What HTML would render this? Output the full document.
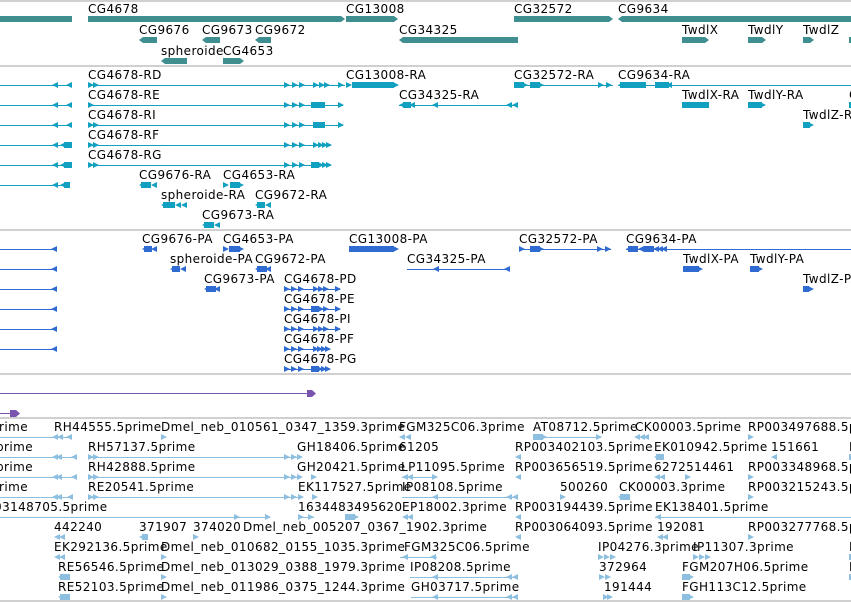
<!DOCTYPE html>
<html><head><meta charset="utf-8"><style>
html,body{margin:0;padding:0;background:#fff;width:851px;height:602px;overflow:hidden}
svg{display:block}
text{font-family:"DejaVu Sans","Liberation Sans",sans-serif;font-size:12px;fill:#000;letter-spacing:0.4px}
</style></head><body>
<svg width="851" height="602" viewBox="0 0 851 602" xmlns="http://www.w3.org/2000/svg">
<defs>
<path id="r" d="M0,-3L6,0L0,3Z"/>
<path id="l" d="M6,-3L0,0L6,3Z"/>
</defs>
<g stroke="#c0c0c0" stroke-width="1.5">
<line x1="0" y1="1" x2="851" y2="1"/><line x1="0" y1="66" x2="851" y2="66"/>
<line x1="0" y1="230" x2="851" y2="230"/><line x1="0" y1="374" x2="851" y2="374"/>
<line x1="0" y1="418" x2="851" y2="418"/><line x1="0" y1="601" x2="851" y2="601"/>
</g>

<g fill="#3f8f91">
<rect x="0" y="16" width="72" height="6"/>
<path d="M88,16H341L345,19L341,22H88Z"/>
<path d="M346,16H394L398,19L394,22H346Z"/>
<path d="M514,16H609L613,19L609,22H514Z"/>
<path d="M622,16H851V22H622L618,19Z"/>
<path d="M143,37H157V43H143L139,40Z"/>
<path d="M206,37H220V43H206L202,40Z"/>
<path d="M259,37H271V43H259L255,40Z"/>
<path d="M403,37H518V43H403L399,40Z"/>
<path d="M682,37H705L709,40L705,43H682Z"/>
<path d="M748,37H762L766,40L762,43H748Z"/>
<path d="M803,37H810L814,40L810,43H803Z"/>
<rect x="849" y="37" width="2" height="6"/>
<path d="M165,58H187V64H165L161,61Z"/>
<path d="M223,58H240L244,61L240,64H223Z"/>
</g>
<text x="88" y="13">CG4678</text><text x="346" y="13">CG13008</text><text x="514" y="13">CG32572</text><text x="618" y="13">CG9634</text>
<text x="139" y="34">CG9676</text><text x="202" y="34">CG9673</text><text x="255" y="34">CG9672</text><text x="399" y="34">CG34325</text>
<text x="682" y="34">TwdlX</text><text x="748" y="34">TwdlY</text><text x="803" y="34">TwdlZ</text>
<text x="161" y="55">spheroide</text><text x="223" y="55">CG4653</text>

<g stroke="#11a0c0" stroke-width="1" fill="none">
<line x1="0" y1="85.5" x2="72" y2="85.5"/><line x1="88" y1="85.5" x2="345" y2="85.5"/><line x1="514" y1="85.5" x2="613" y2="85.5"/><line x1="618" y1="85.5" x2="851" y2="85.5"/>
<line x1="0" y1="105.5" x2="72" y2="105.5"/><line x1="88" y1="105.5" x2="343" y2="105.5"/><line x1="399" y1="105.5" x2="518" y2="105.5"/>
<line x1="0" y1="125.5" x2="72" y2="125.5"/><line x1="88" y1="125.5" x2="343" y2="125.5"/>
<line x1="0" y1="145.5" x2="72" y2="145.5"/><line x1="88" y1="145.5" x2="331" y2="145.5"/>
<line x1="0" y1="165.5" x2="72" y2="165.5"/><line x1="88" y1="165.5" x2="331" y2="165.5"/>
<line x1="0" y1="185.5" x2="70" y2="185.5"/>
</g>
<g fill="#11a0c0">
<g transform="translate(0,85)"><use href="#l" x="52"/><use href="#l" x="66"/><use href="#r" x="88"/><use href="#r" x="93"/><use href="#r" x="284"/><use href="#r" x="292"/><use href="#r" x="299"/><use href="#r" x="313"/><use href="#r" x="319"/><use href="#r" x="324"/><use href="#r" x="338"/><use href="#r" x="346"/><rect x="352" y="-3" width="42" height="6"/><use href="#r" x="393"/>
<rect x="514" y="-3" width="10" height="6"/><use href="#r" x="522"/><rect x="530" y="-3" width="10" height="6"/><use href="#r" x="538"/><use href="#r" x="598"/><use href="#r" x="606"/><rect x="620" y="-3" width="26" height="6"/><use href="#l" x="618"/><use href="#l" x="630"/><use href="#l" x="640"/><rect x="655" y="-3" width="14" height="6"/><use href="#l" x="666"/></g>
<g transform="translate(0,105)"><use href="#l" x="52"/><use href="#l" x="66"/><use href="#r" x="88"/><use href="#r" x="284"/><use href="#r" x="292"/><use href="#r" x="299"/><rect x="311" y="-3" width="14" height="6"/><use href="#r" x="338"/><rect x="403" y="-3" width="8" height="6"/><use href="#l" x="399"/><use href="#l" x="409"/><use href="#l" x="432"/><use href="#l" x="506"/><use href="#l" x="512"/><rect x="682" y="-3" width="27" height="6"/><rect x="748" y="-3" width="14" height="6"/><use href="#r" x="760"/><rect x="849" y="-3" width="2" height="6"/></g>
<g transform="translate(0,125)"><use href="#l" x="52"/><use href="#l" x="66"/><use href="#r" x="88"/><use href="#r" x="93"/><use href="#r" x="284"/><use href="#r" x="292"/><use href="#r" x="299"/><rect x="313" y="-3" width="12" height="6"/><use href="#r" x="338"/><rect x="803" y="-3" width="7" height="6"/><use href="#r" x="808"/></g>
<g transform="translate(0,145)"><use href="#l" x="52"/><use href="#l" x="60"/><rect x="64" y="-3" width="8" height="6"/><use href="#r" x="88"/><use href="#r" x="93"/><use href="#r" x="284"/><use href="#r" x="292"/><use href="#r" x="299"/><use href="#r" x="313"/><use href="#r" x="318"/><use href="#r" x="322"/><use href="#r" x="326"/></g>
<g transform="translate(0,165)"><use href="#l" x="52"/><use href="#l" x="60"/><rect x="64" y="-3" width="8" height="6"/><use href="#r" x="88"/><use href="#r" x="93"/><use href="#r" x="284"/><use href="#r" x="292"/><use href="#r" x="299"/><rect x="311" y="-3" width="8" height="6"/><use href="#r" x="318"/><use href="#r" x="322"/><use href="#r" x="326"/></g>
<g transform="translate(0,185)"><use href="#l" x="52"/><use href="#l" x="60"/><rect x="64" y="-3" width="6" height="6"/><rect x="141" y="-3" width="10" height="6"/><use href="#l" x="139"/><use href="#l" x="151"/><use href="#r" x="223"/><rect x="230" y="-3" width="10" height="6"/><use href="#r" x="238"/></g>
<g transform="translate(0,205)"><rect x="163" y="-3" width="12" height="6"/><use href="#l" x="161"/><use href="#l" x="175"/><use href="#l" x="181"/><rect x="257" y="-3" width="8" height="6"/><use href="#l" x="255"/><use href="#l" x="265"/></g>
<g transform="translate(0,225)"><rect x="204" y="-3" width="10" height="6"/><use href="#l" x="202"/><use href="#l" x="214"/></g>
</g>
<text x="88" y="79">CG4678-RD</text><text x="346" y="79">CG13008-RA</text><text x="514" y="79">CG32572-RA</text><text x="618" y="79">CG9634-RA</text>
<text x="88" y="99">CG4678-RE</text><text x="399" y="99">CG34325-RA</text><text x="682" y="99">TwdlX-RA</text><text x="748" y="99">TwdlY-RA</text><text x="849" y="99">C</text>
<text x="88" y="119">CG4678-RI</text><text x="803" y="119">TwdlZ-RA</text>
<text x="88" y="139">CG4678-RF</text><text x="88" y="159">CG4678-RG</text>
<text x="139" y="179">CG9676-RA</text><text x="223" y="179">CG4653-RA</text>
<text x="161" y="199">spheroide-RA</text><text x="255" y="199">CG9672-RA</text>
<text x="202" y="219">CG9673-RA</text>

<g stroke="#2f6bd0" stroke-width="1">
<line x1="0" y1="249.5" x2="57" y2="249.5"/><line x1="519" y1="249.5" x2="611" y2="249.5"/><line x1="626" y1="249.5" x2="851" y2="249.5"/>
<line x1="0" y1="269.5" x2="57" y2="269.5"/><line x1="407" y1="269.5" x2="510" y2="269.5"/>
<line x1="0" y1="289.5" x2="57" y2="289.5"/><line x1="284" y1="289.5" x2="340" y2="289.5"/>
<line x1="0" y1="309.5" x2="57" y2="309.5"/><line x1="284" y1="309.5" x2="340" y2="309.5"/>
<line x1="0" y1="329.5" x2="57" y2="329.5"/><line x1="284" y1="329.5" x2="340" y2="329.5"/>
<line x1="0" y1="349.5" x2="57" y2="349.5"/><line x1="284" y1="349.5" x2="330" y2="349.5"/>
<line x1="284" y1="369.5" x2="330" y2="369.5"/>
</g>
<g fill="#2f6bd0">
<g transform="translate(0,249)"><use href="#l" x="51"/><rect x="144" y="-3" width="8" height="6"/><use href="#l" x="142"/><use href="#l" x="151"/><use href="#r" x="223"/><rect x="229" y="-3" width="11" height="6"/><use href="#r" x="238"/><rect x="349" y="-3" width="45" height="6"/><use href="#r" x="393"/><use href="#r" x="519"/><rect x="530" y="-3" width="10" height="6"/><use href="#r" x="538"/><use href="#r" x="597"/><use href="#r" x="605"/><rect x="628" y="-3" width="10" height="6"/><use href="#l" x="626"/><use href="#l" x="638"/><rect x="644" y="-3" width="10" height="6"/><use href="#l" x="653"/><use href="#l" x="657"/><use href="#l" x="661"/></g>
<g transform="translate(0,269)"><use href="#l" x="51"/><rect x="172" y="-3" width="8" height="6"/><use href="#l" x="170"/><use href="#l" x="180"/><rect x="257" y="-3" width="10" height="6"/><use href="#l" x="255"/><use href="#l" x="265"/><use href="#l" x="433"/><use href="#l" x="504"/><rect x="683" y="-3" width="16" height="6"/><use href="#r" x="697"/><rect x="750" y="-3" width="9" height="6"/><use href="#r" x="757"/></g>
<g transform="translate(0,289)"><use href="#l" x="51"/><rect x="206" y="-3" width="10" height="6"/><use href="#l" x="204"/><use href="#l" x="214"/><use href="#r" x="284"/><use href="#r" x="291"/><use href="#r" x="298"/><use href="#r" x="313"/><use href="#r" x="318"/><use href="#r" x="323"/><use href="#r" x="335"/><rect x="803" y="-3" width="6" height="6"/><use href="#r" x="808"/></g>
<g transform="translate(0,309)"><use href="#l" x="51"/><use href="#r" x="284"/><use href="#r" x="291"/><use href="#r" x="298"/><rect x="311" y="-3" width="8" height="6"/><use href="#r" x="318"/><use href="#r" x="323"/><use href="#r" x="335"/></g>
<g transform="translate(0,329)"><use href="#l" x="51"/><use href="#r" x="284"/><use href="#r" x="291"/><use href="#r" x="298"/><use href="#r" x="313"/><use href="#r" x="318"/><use href="#r" x="323"/><use href="#r" x="335"/></g>
<g transform="translate(0,349)"><use href="#l" x="51"/><use href="#r" x="284"/><use href="#r" x="291"/><use href="#r" x="298"/><use href="#r" x="313"/><use href="#r" x="317"/><use href="#r" x="321"/><use href="#r" x="325"/></g>
<g transform="translate(0,369)"><use href="#r" x="284"/><use href="#r" x="291"/><use href="#r" x="298"/><rect x="311" y="-3" width="8" height="6"/><use href="#r" x="317"/><use href="#r" x="321"/><use href="#r" x="325"/></g>
</g>
<text x="142" y="243">CG9676-PA</text><text x="223" y="243">CG4653-PA</text><text x="349" y="243">CG13008-PA</text><text x="519" y="243">CG32572-PA</text><text x="626" y="243">CG9634-PA</text>
<text x="170" y="263">spheroide-PA</text><text x="255" y="263">CG9672-PA</text><text x="407" y="263">CG34325-PA</text><text x="683" y="263">TwdlX-PA</text><text x="750" y="263">TwdlY-PA</text>
<text x="204" y="283">CG9673-PA</text><text x="284" y="283">CG4678-PD</text><text x="803" y="283">TwdlZ-PA</text>
<text x="284" y="303">CG4678-PE</text><text x="284" y="323">CG4678-PI</text><text x="284" y="343">CG4678-PF</text><text x="284" y="363">CG4678-PG</text>

<g stroke="#7a55b0"><line x1="0" y1="393.5" x2="310" y2="393.5"/><line x1="0" y1="413.5" x2="12" y2="413.5"/></g>
<g fill="#7a55b0"><path d="M307,390H312L316,393.5L312,397H307Z"/><path d="M10,410H16L20,413.5L16,417H10Z"/></g>

<g stroke="#8cbfe0" stroke-width="1">
<line x1="0" y1="437.5" x2="72" y2="437.5"/><line x1="533" y1="437.5" x2="601" y2="437.5"/>
<line x1="0" y1="457.5" x2="76" y2="457.5"/><line x1="88" y1="457.5" x2="300" y2="457.5"/>
<line x1="0" y1="477.5" x2="76" y2="477.5"/><line x1="88" y1="477.5" x2="300" y2="477.5"/><line x1="402" y1="477.5" x2="437" y2="477.5"/>
<line x1="0" y1="497.5" x2="72" y2="497.5"/><line x1="88" y1="497.5" x2="300" y2="497.5"/><line x1="402" y1="497.5" x2="518" y2="497.5"/>
<line x1="0" y1="517.5" x2="270" y2="517.5"/><line x1="298" y1="517.5" x2="314" y2="517.5"/><line x1="655" y1="517.5" x2="851" y2="517.5"/>
<line x1="400" y1="557.5" x2="437" y2="557.5"/>
<line x1="410" y1="577.5" x2="518" y2="577.5"/>
<line x1="411" y1="597.5" x2="518" y2="597.5"/>
</g>
<g fill="#8cbfe0">
<g transform="translate(0,437)"><use href="#l" x="52"/><use href="#l" x="57"/><use href="#l" x="66"/><use href="#r" x="161"/><use href="#l" x="399"/><use href="#l" x="405"/><rect x="533" y="-3" width="10" height="6"/><use href="#r" x="541"/><use href="#r" x="596"/><use href="#l" x="634"/><use href="#l" x="639"/><use href="#l" x="643"/><use href="#r" x="748"/></g>
<g transform="translate(0,457)"><use href="#l" x="52"/><use href="#l" x="56"/><use href="#l" x="71"/><use href="#r" x="88"/><use href="#r" x="93"/><use href="#r" x="284"/><use href="#r" x="291"/><use href="#r" x="297"/><use href="#l" x="515"/><rect x="656" y="-3" width="8" height="6"/><use href="#l" x="654"/><use href="#l" x="771"/><rect x="849" y="-3" width="2" height="6"/></g>
<g transform="translate(0,477)"><use href="#l" x="52"/><use href="#l" x="56"/><use href="#l" x="71"/><use href="#r" x="88"/><use href="#r" x="93"/><use href="#r" x="284"/><use href="#r" x="291"/><use href="#r" x="297"/><use href="#r" x="311"/><use href="#l" x="402"/><use href="#l" x="407"/><use href="#r" x="432"/><use href="#l" x="515"/><use href="#l" x="654"/><use href="#l" x="659"/><use href="#r" x="685"/><use href="#r" x="748"/></g>
<g transform="translate(0,497)"><use href="#l" x="52"/><use href="#l" x="56"/><use href="#l" x="67"/><use href="#r" x="88"/><use href="#r" x="93"/><use href="#r" x="284"/><use href="#r" x="291"/><use href="#r" x="298"/><use href="#r" x="312"/><use href="#l" x="432"/><use href="#l" x="506"/><use href="#l" x="512"/><use href="#r" x="560"/><rect x="620" y="-3" width="10" height="6"/><use href="#l" x="618"/><use href="#r" x="748"/></g>
<g transform="translate(0,517)"><use href="#r" x="234"/><use href="#r" x="265"/><use href="#r" x="298"/><use href="#r" x="308"/><rect x="345" y="-3" width="10" height="6"/><use href="#r" x="353"/><use href="#l" x="402"/><use href="#l" x="407"/><use href="#l" x="515"/><use href="#l" x="655"/></g>
<g transform="translate(0,537)"><use href="#l" x="54"/><use href="#l" x="59"/><rect x="142" y="-3" width="6" height="6"/><use href="#l" x="139"/><use href="#r" x="193"/><use href="#l" x="515"/><use href="#l" x="657"/><use href="#l" x="662"/><use href="#r" x="748"/></g>
<g transform="translate(0,557)"><use href="#l" x="54"/><use href="#l" x="59"/><use href="#r" x="161"/><use href="#l" x="402"/><use href="#l" x="430"/><use href="#r" x="598"/><use href="#r" x="604"/><use href="#r" x="610"/><use href="#r" x="693"/><use href="#r" x="699"/><use href="#r" x="705"/><rect x="849" y="-3" width="2" height="6"/></g>
<g transform="translate(0,577)"><rect x="60" y="-3" width="10" height="6"/><use href="#l" x="58"/><use href="#r" x="161"/><use href="#l" x="432"/><use href="#l" x="506"/><use href="#l" x="512"/><use href="#r" x="599"/><use href="#r" x="605"/><rect x="682" y="-3" width="8" height="6"/><use href="#r" x="688"/><rect x="849" y="-3" width="2" height="6"/></g>
<g transform="translate(0,597)"><rect x="60" y="-3" width="10" height="6"/><use href="#l" x="58"/><use href="#r" x="161"/><use href="#l" x="432"/><use href="#l" x="506"/><use href="#l" x="512"/><use href="#r" x="603"/><use href="#r" x="607"/><rect x="682" y="-3" width="8" height="6"/><use href="#r" x="688"/></g>
</g>
<text x="-17" y="431">5prime</text><text x="54" y="431">RH44555.5prime</text><text x="161" y="431">Dmel_neb_010561_0347_1359.3prime</text><text x="399" y="431">FGM325C06.3prime</text><text x="533" y="431">AT08712.5prime</text><text x="635" y="431">CK00003.5prime</text><text x="748" y="431">RP003497688.5prime</text>
<text x="-12" y="451">5prime</text><text x="88" y="451">RH57137.5prime</text><text x="297" y="451">GH18406.5prime</text><text x="399" y="451">61205</text><text x="515" y="451">RP003402103.5prime</text><text x="654" y="451">EK010942.5prime</text><text x="771" y="451">151661</text><text x="849" y="451">I</text>
<text x="-12" y="471">5prime</text><text x="88" y="471">RH42888.5prime</text><text x="297" y="471">GH20421.5prime</text><text x="401" y="471">LP11095.5prime</text><text x="515" y="471">RP003656519.5prime</text><text x="654" y="471">6272514461</text><text x="748" y="471">RP003348968.5prime</text>
<text x="-17" y="491">5prime</text><text x="88" y="491">RE20541.5prime</text><text x="298" y="491">EK117527.5prime</text><text x="402" y="491">IP08108.5prime</text><text x="560" y="491">500260</text><text x="619" y="491">CK00003.3prime</text><text x="748" y="491">RP003215243.5prime</text>
<text x="-14" y="511">003148705.5prime</text><text x="298" y="511">1634483495620</text><text x="402" y="511">EP18002.3prime</text><text x="515" y="511">RP003194439.5prime</text><text x="655" y="511">EK138401.5prime</text>
<text x="54" y="531">442240</text><text x="139" y="531">371907</text><text x="193" y="531">374020</text><text x="243" y="531">Dmel_neb_005207_0367_1902.3prime</text><text x="515" y="531">RP003064093.5prime</text><text x="657" y="531">192081</text><text x="748" y="531">RP003277768.5prime</text>
<text x="54" y="551">EK292136.5prime</text><text x="161" y="551">Dmel_neb_010682_0155_1035.3prime</text><text x="404" y="551">FGM325C06.5prime</text><text x="598" y="551">IP04276.3prime</text><text x="693" y="551">IP11307.3prime</text><text x="849" y="551">I</text>
<text x="58" y="571">RE56546.5prime</text><text x="161" y="571">Dmel_neb_013029_0388_1979.3prime</text><text x="410" y="571">IP08208.5prime</text><text x="599" y="571">372964</text><text x="682" y="571">FGM207H06.5prime</text><text x="849" y="571">I</text>
<text x="58" y="591">RE52103.5prime</text><text x="161" y="591">Dmel_neb_011986_0375_1244.3prime</text><text x="411" y="591">GH03717.5prime</text><text x="604" y="591">191444</text><text x="682" y="591">FGH113C12.5prime</text>
</svg>
</body></html>
